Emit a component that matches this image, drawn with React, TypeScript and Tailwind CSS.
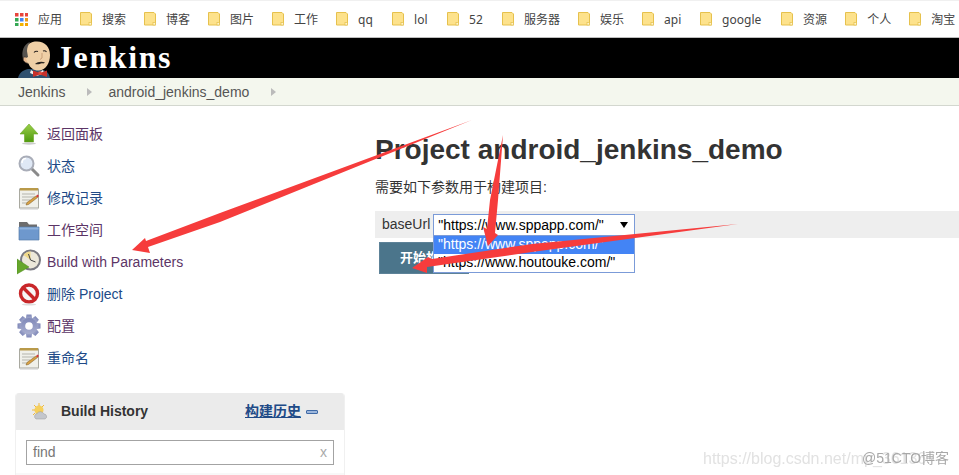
import React from "react";

const bookmarks: [string, string][] = [
  ["搜索", ""], ["博客", ""], ["图片", ""], ["工作", ""], ["qq", "w-[16px]"], ["lol", "w-[15px]"], ["52", "w-[15px]"],
  ["服务器", ""], ["娱乐", ""], ["api", "w-[18px]"], ["google", "w-[41px]"], ["资源", ""], ["个人", ""], ["淘宝", ""],
];

function Folder() {
  return (
    <svg width="12" height="14" viewBox="0 0 12 14" className="mr-[10px] shrink-0">
      <path d="M.5.5h9.5l1.5 1.5v11H.5z" fill="#fde28c" stroke="#e6c14d" />
      <rect x="9" y="10.5" width="2.5" height="2.5" fill="#fff6cf" stroke="#e6c14d" strokeWidth=".7" />
    </svg>
  );
}

function Apps() {
  const c = ["#e8453c", "#e8453c", "#e8453c", "#34a853", "#4285f4", "#ea9a1a", "#34a853", "#f4b400", "#f4a400"];
  return (
    <svg width="13" height="13" viewBox="0 0 13 13" className="mr-[10px] shrink-0">
      {c.map((f, i) => (
        <rect key={i} x={(i % 3) * 5} y={Math.floor(i / 3) * 5} width="3.5" height="3.5" fill={f} />
      ))}
    </svg>
  );
}

function JenkinsLogo() {
  return (
    <svg width="34" height="40" viewBox="0 0 34 40" className="shrink-0">
      <path d="M0 40c1-5 5-8 10-9l12 0c5 1 9 3 10 9z" fill="#2f506e" />
      <path d="M13 32l6 4 6-4 1 3-7 3-7-3z" fill="#f2f2ee" />
      <path d="M7 13C8 6 13 3.500 19 3.500 27 3.500 32 9 32 17c0 8-4 15-11 15.500-5 .3-9-2.500-10.500-7-3 0-5-3-4-6 .3-1 .6-2 .5-6.500z" fill="#efcfa6" />
      <path d="M5 21C3 13 6 6 12 4c-2 3-3 6-3 9l1 6-2 1c-1 0-2 0-3 1z" fill="#56534f" />
      <path d="M7.500 19c-2-.5-3 1.500-2 3.500 .8 1.600 2.500 2.500 4 2.500" fill="#e6b88e" stroke="#3a2f2a" strokeWidth=".7" />
      <path d="M16 14.500c1-1.200 2.500-1.500 4-1M25 13c1.200-.5 2.500-.3 3.500 .8" stroke="#2a2420" strokeWidth="1.100" fill="none" />
      <path d="M17 26c2.500-2.500 7-3 10-1.500-1 1-2 1-3 .8-2 .5-4 1.500-7 .7z" fill="#2a2420" />
      <path d="M24 15v5l-2 1.500" stroke="#b88a66" strokeWidth=".7" fill="none" />
      <path d="M15 32.500l7 2.500 7-2.500v6.500l-7-2.500-7 2.500z" fill="#c8302a" />
      <rect x="20.500" y="33.500" width="3" height="3.500" fill="#e24a3c" />
    </svg>
  );
}

function Caret() {
  return <span className="inline-block w-0 h-0 border-y-[4px] border-y-transparent border-l-[5px] border-l-[#bbb]" />;
}

const Up = () => (
  <svg width="24" height="24" viewBox="0 0 24 24">
    <defs>
      <linearGradient id="g1" x1="0" y1="0" x2="0" y2="1">
        <stop offset="0" stopColor="#9bd04a" />
        <stop offset="1" stopColor="#4f9a0e" />
      </linearGradient>
    </defs>
    <path d="M12 2 21 12H16.5V20H7.5V12H3z" fill="url(#g1)" stroke="#6aa524" strokeWidth=".6" />
    <ellipse cx="12" cy="21.5" rx="7" ry="1.2" fill="#ccc" />
  </svg>
);
const Search = () => (
  <svg width="24" height="24" viewBox="0 0 24 24">
    <path d="M14.5 14.5 21 21" stroke="#8a8a8a" strokeWidth="3" strokeLinecap="round" />
    <circle cx="9.5" cy="9.5" r="7" fill="#dfe8f5" stroke="#a9adb8" strokeWidth="2" />
    <path d="M5 9c0-3 2-4.500 4-4.500" stroke="#fff" strokeWidth="1.500" fill="none" />
  </svg>
);
const Notepad = () => (
  <svg width="24" height="24" viewBox="0 0 24 24">
    <rect x="2.500" y="3" width="19" height="19" fill="#f0f0ea" stroke="#a9a9a0" />
    <rect x="3" y="2" width="18" height="2.500" fill="#b99a4a" />
    <path d="M5 8h13M5 11h13M5 14h8M5 17h6" stroke="#b5b5ad" />
    <path d="M9 19l1-2.500 9-6.500 1.500 1.500-9 7z" fill="#d8a043" stroke="#7a5a20" strokeWidth=".5" />
    <path d="M19 10l1.500 1.500 1.500-1.500-1.500-1.500z" fill="#d63a3a" />
    <path d="M3 23h18" stroke="#ccc" />
  </svg>
);
const FolderBig = () => (
  <svg width="24" height="24" viewBox="0 0 24 24">
    <path d="M2 4h8l2 2.500h8V12H2z" fill="#6d6d6d" />
    <path d="M2 9h20v13H2z" fill="#6e98cd" stroke="#567ca9" strokeWidth=".7" />
    <path d="M2.500 9.500h19v2h-19z" fill="#8fb2dd" />
  </svg>
);
const Clock = () => (
  <svg width="24" height="26" viewBox="0 0 24 26">
    <circle cx="13.500" cy="11" r="9.500" fill="#ece8da" stroke="#7a7a82" strokeWidth="2" />
    <path d="M13.500 11V2.500A8.500 8.500 0 0 0 6.500 6z" fill="#f0d98a" />
    <path d="M13.500 11l-2-6M13.500 11l5 2" stroke="#444" />
    <path d="M0 10v15l12-7z" fill="#66a62c" stroke="#4a8a18" strokeWidth=".5" />
  </svg>
);
const NoEntry = () => (
  <svg width="24" height="24" viewBox="0 0 24 24">
    <circle cx="12" cy="11.500" r="8.500" fill="#f7f7f7" stroke="#c9272a" strokeWidth="3.400" />
    <path d="M6 5.500l12 12" stroke="#c9272a" strokeWidth="3.400" />
    <ellipse cx="12" cy="22.500" rx="7" ry="1" fill="#ddd" />
  </svg>
);
const Gear = () => (
  <svg width="24" height="24" viewBox="0 0 24 24">
    <defs>
      <linearGradient id="g2" x1="0" y1="0" x2="0" y2="1">
        <stop offset="0" stopColor="#7f88b8" />
        <stop offset="1" stopColor="#a8aecf" />
      </linearGradient>
    </defs>
    {[0, 45, 90, 135, 180, 225, 270, 315].map((a) => (
      <path key={a} d="M9.500 .5h5l.8 5h-6.600z" fill="url(#g2)" transform={`rotate(${a} 12 12)`} />
    ))}
    <circle cx="12" cy="12" r="8" fill="url(#g2)" />
    <circle cx="12" cy="12" r="3.800" fill="#fff" />
  </svg>
);

const items: [React.ReactNode, string, string][] = [
  [<Up />, "返回面板", "text-[#5c3566]"],
  [<Search />, "状态", "text-[#204a87]"],
  [<Notepad />, "修改记录", "text-[#204a87]"],
  [<FolderBig />, "工作空间", "text-[#5c3566]"],
  [<Clock />, "Build with Parameters", "text-[#5c3566]"],
  [<NoEntry />, "删除 Project", "text-[#204a87]"],
  [<Gear />, "配置", "text-[#5c3566]"],
  [<Notepad />, "重命名", "text-[#204a87]"],
];

export default function App() {
  return (
    <div className="relative w-[959px] h-[475px] overflow-hidden bg-white [font-family:'Liberation_Sans','Noto_Sans_CJK_SC',sans-serif]">
      {/* Browser bookmarks bar */}
      <div className="h-[38px] flex items-center pl-[15px] gap-[18px] bg-white border-t border-t-[#f0f0f0] border-b border-b-[#bdbdbd] text-[12px] text-[#444] whitespace-nowrap [font-family:'Noto_Sans','Noto_Sans_CJK_SC',sans-serif]">
        <div className="flex items-center">
          <Apps />
          <span className="mt-[1px]">应用</span>
        </div>
        {bookmarks.map(([b, w]) => (
          <div key={b} className="flex items-center">
            <Folder />
            <span className={`mt-[1px] ${w}`}>{b}</span>
          </div>
        ))}
      </div>

      {/* Jenkins header */}
      <div className="h-[40px] bg-black flex items-end pl-[18px] overflow-hidden">
        <JenkinsLogo />
        <span className="ml-[4px] mb-[3px] text-white font-bold text-[32px] leading-[36px] tracking-[1.6px] [font-family:'Liberation_Serif',serif]">
          Jenkins
        </span>
      </div>

      {/* Breadcrumb */}
      <div className="h-[28px] flex items-center pl-[18px] pt-[1px] bg-[#f4f7ee] border-b border-b-[#d3d7cf] text-[14px] text-[#555]">
        <span>Jenkins</span>
        <span className="ml-[22px] mr-[16px] flex"><Caret /></span>
        <span>android_jenkins_demo</span>
        <span className="ml-[22px] flex"><Caret /></span>
      </div>

      <div className="flex">
        {/* Sidebar */}
        <div className="w-[375px] shrink-0 pl-[15px] pr-[30px] pt-[12px]">
          {items.map(([icon, label, color], i) => (
            <div key={i} className={`h-8 flex items-center text-[14px] ${color}`}>
              <span className="w-[24px] ml-[2px] mr-[6px] flex justify-center">{icon}</span>
              <span>{label}</span>
            </div>
          ))}
          <div className="mt-[19px] border-x border-x-[#f0f0f0] rounded-t-[4px] overflow-hidden">
            <div className="h-[37px] bg-[#ebebeb] flex items-center pl-[15px] pr-[26px]">
              <svg width="18" height="18" viewBox="0 0 18 18" className="shrink-0">
                <circle cx="8" cy="7" r="4.500" fill="#f6cf5a" />
                <path d="M8 0v3M1 7h3M3 2l2 2M13 2l-2 2M2 12l2-2" stroke="#f0b93a" />
                <path d="M5 16a3 3 0 0 1 1-5.500 4 4 0 0 1 7 .5 2.600 2.600 0 0 1 1 5z" fill="#c3c6cc" stroke="#999" strokeWidth=".5" />
              </svg>
              <span className="ml-[12px] text-[14px] font-bold text-[#333]">Build History</span>
              <span className="ml-auto text-[14px] font-bold underline text-[#204a87]">构建历史</span>
              <span className="ml-[5px] w-[12px] h-[4px] bg-[#9db7dc] border border-[#3f6aa6] rounded-[1px]" />
            </div>
            <div className="h-[43px] pt-[10px] px-[10px] bg-white">
              <div className="h-[25px] border border-[#a3a3a3] flex items-center justify-between px-[6px] text-[14px] text-[#777]">
                <span>find</span>
                <span className="text-[#aaa]">x</span>
              </div>
            </div>
            <div className="h-[4px] bg-[#f8f8f8]" />
          </div>
        </div>

        {/* Main */}
        <div className="flex-1 pt-[28px]">
          <h1 className="text-[28px] leading-8 font-bold text-[#333]">Project android_jenkins_demo</h1>
          <p className="mt-[11px] text-[14px] leading-5 text-[#333]">需要如下参数用于构建项目:</p>
          <div className="relative mt-[14px] h-[27px] bg-[#eeeeee] flex items-center pl-[7px] text-[14px] text-[#333]">
            <span>baseUrl</span>
            <div className="ml-[3px] mt-[1px] w-[202px] h-[22px] bg-white border border-[#7b9bd8] flex items-center justify-between pl-[4px] pr-[6px] text-black">
              <span>"https://www.sppapp.com/"</span>
              <span className="w-0 h-0 border-x-[4px] border-x-transparent border-t-[6px] border-t-black" />
            </div>
            <div className="absolute left-[58px] top-[24px] w-[202px] z-10 bg-white border border-[#7b9bd8] text-[14px]">
              <div className="h-[18px] leading-[16px] pl-[4px] bg-[#4384f5] text-white">"https://www.sppapp.com/"</div>
              <div className="h-[18px] leading-[16px] pl-[4px] text-black">"https://www.houtouke.com/"</div>
            </div>
          </div>
          <button className="mt-[4px] ml-[4px] w-[90px] h-[32px] bg-[#4b758b] border border-[#5d8298] text-white text-[13px] font-bold text-left pl-[20px]">
            开始构建
          </button>
        </div>
      </div>

      {/* Screenshot annotation arrows */}
      <svg className="absolute inset-0 z-20 pointer-events-none" width="959" height="475" viewBox="0 0 959 475">
        <polygon points="472,120 220,213 146,241 145,238 132,250 150,253 148,247 220,222" fill="#f63c3c" />
        <polygon points="503,135 498,200 495,233 498,235 488,246 483,227 487,229 490,200" fill="#f63c3c" />
        <polygon points="738,224 532,244 432,259 428,257 412,268 427,273 427,267 532,252" fill="#f63c3c" />
      </svg>

      {/* Watermarks */}
      <span className="absolute left-[703px] top-[447px] text-[16px] text-[#e2e2e2] blur-[0.7px] whitespace-nowrap">
        https://blog.csdn.net/mp_36136
      </span>
      <span className="absolute left-[862px] top-[448px] text-[14px] text-[#a8a8a8] blur-[0.6px] whitespace-nowrap">
        @51CTO博客
      </span>
    </div>
  );
}
